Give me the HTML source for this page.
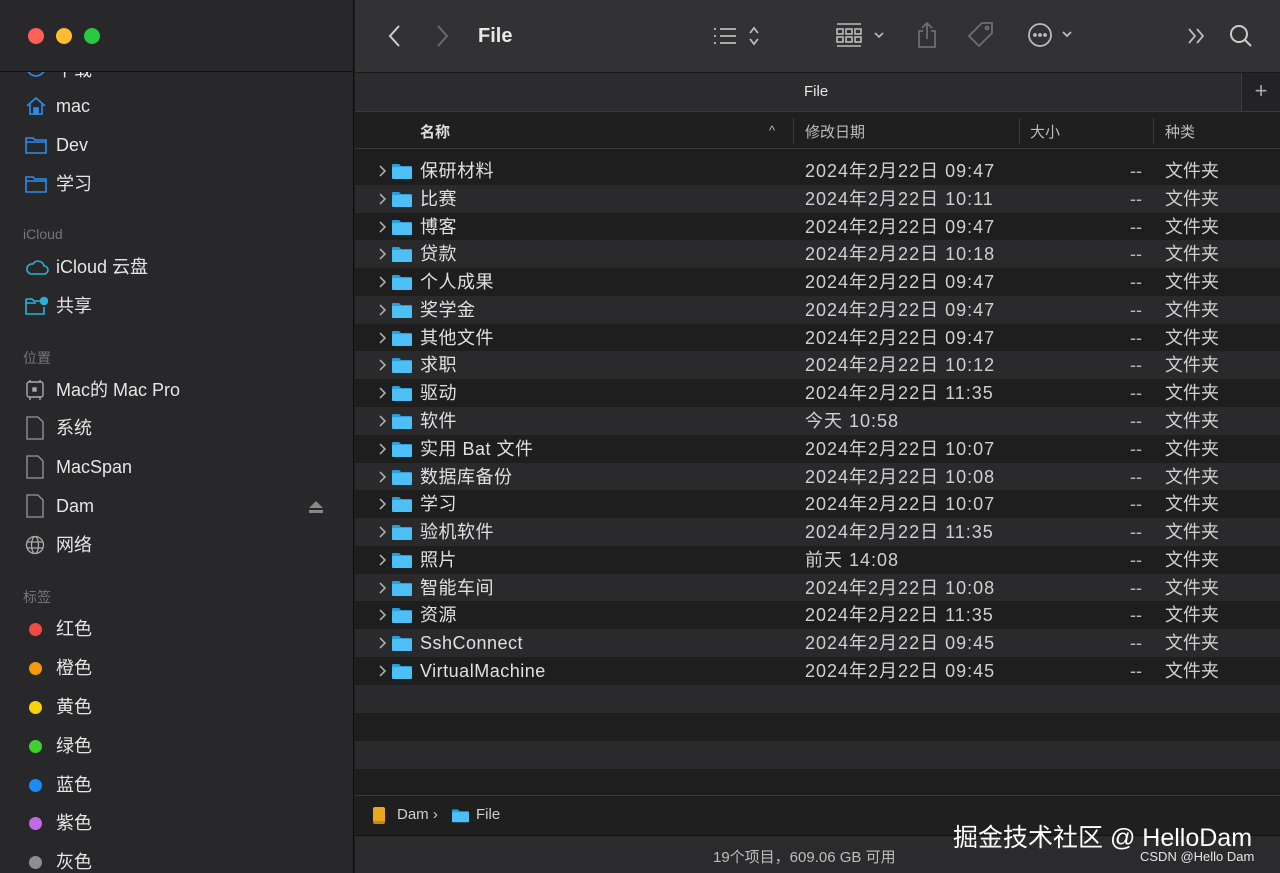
<!DOCTYPE html><html><head><meta charset="utf-8"><style>
*{margin:0;padding:0;box-sizing:border-box}
body{width:1280px;height:873px;overflow:hidden;background:#1e1e1f;font-family:"Liberation Sans","Noto Sans CJK SC",sans-serif;color:#dcdcdc;position:relative}
.abs{position:absolute}
#side{left:0;top:0;width:354px;height:873px;background:#28282b;border-right:1px solid #0c0c0c;overflow:hidden}
.si{position:absolute;left:56px;font-size:18px;color:#e6e6e6;line-height:20px}
.sh{position:absolute;left:23px;font-size:14px;color:#76767a}
.ic{position:absolute;left:25px}
.dot{position:absolute;left:29px;width:13px;height:13px;border-radius:50%}
#tb{left:355px;top:0;width:925px;height:72px;background:#323234;z-index:5}
#tabs{left:355px;top:72px;width:925px;height:39px;background:#2c2c2e;border-top:1px solid #1a1a1a}
#hdr{left:355px;top:111px;width:925px;height:38px;background:#1f1f20;border-top:1px solid #3a3a3c;border-bottom:1px solid #3a3a3c}
.hc{position:absolute;top:9px;font-size:15px;color:#bdbdbd}
.sep{position:absolute;top:6px;width:1px;height:26px;background:#3a3a3c}
.row{position:absolute;left:355px;width:925px;height:28px;font-size:18px;line-height:28px;color:#e0e0e0;background:#1e1e1f}
.row span{position:absolute;top:0}
.row .c{left:450px;color:#d0d0d0;letter-spacing:1px}
.row .s{left:775px;color:#bbb}
.row .k{left:810px;color:#d0d0d0}
.row .n{left:65px;letter-spacing:0.5px}
.row .a{left:23px;top:8px;width:9px;height:12px}
.l{background:#2a2a2c}
.fd{position:absolute;left:37px;top:6px;width:20px;height:16px}
</style></head><body>
<svg width="0" height="0" style="position:absolute"><defs>
<symbol id="f" viewBox="0 0 20 16"><path d="M0 2a1 1 0 0 1 1-1h6l2 2h10a1 1 0 0 1 1 1v11H0z" fill="#2a9fdc"/><rect y="4" width="20" height="12" rx="1" fill="#4cc0f4"/></symbol>
<symbol id="ch" viewBox="0 0 9 12"><path d="M2 1l5 5-5 5" fill="none" stroke="#aaa" stroke-width="1.6"/></symbol>
</defs></svg>
<div id="side" class="abs">
<svg class="ic" style="top:62px" width="22" height="18" viewBox="0 0 22 18" fill="none" stroke="#2a8cf0" stroke-width="1.6"><circle cx="11" cy="5" r="9"/></svg>
<div class="si" style="top:60px">下载</div>
<div class="abs" style="left:0;top:0;width:354px;height:72px;background:#28282b;border-bottom:1px solid #111"></div>
<div class="abs" style="left:28px;top:28px;width:16px;height:16px;border-radius:50%;background:#fe5f57"></div>
<div class="abs" style="left:56px;top:28px;width:16px;height:16px;border-radius:50%;background:#febc2e"></div>
<div class="abs" style="left:84px;top:28px;width:16px;height:16px;border-radius:50%;background:#28c840"></div>
<svg class="ic" style="top:95px" width="22" height="22" viewBox="0 0 22 22" fill="none" stroke="#2a8cf0" stroke-width="1.6"><path d="M2 11L11 3l9 8M5 9v10h12V9"/><rect x="9" y="13" width="4" height="6" fill="#2a8cf0"/></svg><div class="si" style="top:96px">mac</div>
<svg class="ic" style="top:136px" width="22" height="18" viewBox="0 0 22 18" fill="none" stroke="#2a8cf0" stroke-width="1.6"><path d="M1 2h7l2 2h11v13H1zM1 6h20"/></svg><div class="si" style="top:135px">Dev</div>
<svg class="ic" style="top:175px" width="22" height="18" viewBox="0 0 22 18" fill="none" stroke="#2a8cf0" stroke-width="1.6"><path d="M1 2h7l2 2h11v13H1zM1 6h20"/></svg><div class="si" style="top:174px">学习</div>
<div class="sh" style="top:226px">iCloud</div>
<svg class="ic" style="top:259px" width="24" height="16" viewBox="0 0 24 16" fill="none" stroke="#2ab0d8" stroke-width="1.6"><path d="M6 15h13a4 4 0 0 0 0-8 6 6 0 0 0-11-2A5 5 0 0 0 6 15z"/></svg><div class="si" style="top:257px">iCloud 云盘</div>
<svg class="ic" style="top:296px" width="23" height="19" viewBox="0 0 23 19" fill="none" stroke="#2ab0d8" stroke-width="1.6"><path d="M1 3h6l2 2h6M1 3v15h18v-7M1 7h10"/><circle cx="19" cy="5" r="3.5" fill="#2ab0d8"/></svg><div class="si" style="top:296px">共享</div>
<div class="sh" style="top:348px">位置</div>
<svg class="ic" style="top:379px" width="20" height="22" viewBox="0 0 20 22" fill="none" stroke="#aaa" stroke-width="1.4"><rect x="2" y="3" width="16" height="15" rx="2"/><path d="M5 1v2M15 1v2M5 18v3M15 18v3"/><rect x="8" y="9" width="3" height="3" fill="#aaa"/></svg><div class="si" style="top:380px">Mac的 Mac Pro</div>
<svg class="ic" style="top:416px" width="20" height="24" viewBox="0 0 20 24" fill="none" stroke="#999" stroke-width="1.3"><path d="M2 1h11l5 5v17H2z"/></svg><div class="si" style="top:418px">系统</div>
<svg class="ic" style="top:455px" width="20" height="24" viewBox="0 0 20 24" fill="none" stroke="#999" stroke-width="1.3"><path d="M2 1h11l5 5v17H2z"/></svg><div class="si" style="top:457px">MacSpan</div>
<svg class="ic" style="top:494px" width="20" height="24" viewBox="0 0 20 24" fill="none" stroke="#999" stroke-width="1.3"><path d="M2 1h11l5 5v17H2z"/></svg><div class="si" style="top:496px">Dam</div>
<svg class="abs" style="left:309px;top:501px" width="14" height="12" viewBox="0 0 14 12" fill="#888"><path d="M7 0l7 7H0z"/><rect y="9" width="14" height="3"/></svg>
<svg class="ic" style="top:535px" width="20" height="20" viewBox="0 0 20 20" fill="none" stroke="#aaa" stroke-width="1.3"><circle cx="10" cy="10" r="8.5"/><ellipse cx="10" cy="10" rx="3.5" ry="8.5"/><path d="M2 7h16M2 13h16"/></svg><div class="si" style="top:535px">网络</div>
<div class="sh" style="top:587px">标签</div>
<div class="dot" style="top:623px;background:#f04a45"></div><div class="si" style="top:619px">红色</div>
<div class="dot" style="top:662px;background:#f59a0b"></div><div class="si" style="top:658px">橙色</div>
<div class="dot" style="top:701px;background:#f5d30b"></div><div class="si" style="top:697px">黄色</div>
<div class="dot" style="top:740px;background:#3fd12c"></div><div class="si" style="top:736px">绿色</div>
<div class="dot" style="top:779px;background:#1a8cf5"></div><div class="si" style="top:775px">蓝色</div>
<div class="dot" style="top:817px;background:#c06ae8"></div><div class="si" style="top:813px">紫色</div>
<div class="dot" style="top:856px;background:#8e8e92"></div><div class="si" style="top:852px">灰色</div>
</div>
<div id="tb" class="abs">
<svg class="abs" style="left:32px;top:24px" width="14" height="24" viewBox="0 0 14 24" fill="none" stroke="#cfcfcf" stroke-width="2"><path d="M12 2L3 12l9 10"/></svg>
<svg class="abs" style="left:81px;top:24px" width="14" height="24" viewBox="0 0 14 24" fill="none" stroke="#6a6a6c" stroke-width="2"><path d="M2 2l9 10-9 10"/></svg>
<div class="abs" style="left:123px;top:24px;font-size:20px;line-height:24px;font-weight:bold;color:#e8e8e8">File</div>
<svg class="abs" style="left:357px;top:25px" width="52" height="22" viewBox="0 0 52 22" fill="none" stroke="#bbb" stroke-width="1.8"><path d="M8 4h16M8 11h16M8 18h16M2 4h2M2 11h2M2 18h2M38 8l4-5 4 5M38 14l4 5 4-5"/></svg>
<svg class="abs" style="left:480px;top:22px" width="56" height="26" viewBox="0 0 56 26" fill="none" stroke="#bbb" stroke-width="1.6"><path d="M2 2h24M2 24h24"/><rect x="2" y="7" width="6" height="5"/><rect x="11" y="7" width="6" height="5"/><rect x="20" y="7" width="6" height="5"/><rect x="2" y="15" width="6" height="5"/><rect x="11" y="15" width="6" height="5"/><rect x="20" y="15" width="6" height="5"/><path d="M40 11l4 4 4-4"/></svg>
<svg class="abs" style="left:561px;top:21px" width="22" height="28" viewBox="0 0 22 28" fill="none" stroke="#6e6e70" stroke-width="1.8"><path d="M7 10H3v16h16V10h-4M11 18V2M6 7l5-5 5 5"/></svg>
<svg class="abs" style="left:612px;top:21px" width="28" height="28" viewBox="0 0 28 28" fill="none" stroke="#6e6e70" stroke-width="1.8"><path d="M15 2h10v10L12 25 2 15z"/><circle cx="20" cy="7" r="1.5"/></svg>
<svg class="abs" style="left:672px;top:22px" width="50" height="26" viewBox="0 0 50 26" fill="none" stroke="#bbb" stroke-width="1.8"><circle cx="13" cy="13" r="11"/><circle cx="8" cy="13" r="1" fill="#bbb"/><circle cx="13" cy="13" r="1" fill="#bbb"/><circle cx="18" cy="13" r="1" fill="#bbb"/><path d="M36 10l4 4 4-4"/></svg>
<svg class="abs" style="left:832px;top:27px" width="20" height="18" viewBox="0 0 20 18" fill="none" stroke="#bbb" stroke-width="1.8"><path d="M2 2l6 7-6 7M10 2l6 7-6 7"/></svg>
<svg class="abs" style="left:874px;top:24px" width="24" height="24" viewBox="0 0 24 24" fill="none" stroke="#ccc" stroke-width="2"><circle cx="10" cy="10" r="8"/><path d="M16 16l6 6"/></svg>
</div>
<div id="tabs" class="abs">
<div class="abs" style="left:449px;top:10px;font-size:15px;color:#e8e8e8">File</div>
<div class="abs" style="left:886px;top:0;width:39px;height:38px;background:#232325;border-left:1px solid #3a3a3c;color:#aaa;font-size:22px;text-align:center;line-height:36px">+</div>
</div>
<div id="hdr" class="abs">
<div class="hc" style="left:65px;font-weight:bold;color:#ddd">名称</div>
<div class="hc" style="left:414px;font-size:13px;top:11px">^</div>
<div class="sep" style="left:438px"></div>
<div class="hc" style="left:450px">修改日期</div>
<div class="sep" style="left:664px"></div>
<div class="hc" style="left:675px">大小</div>
<div class="sep" style="left:798px"></div>
<div class="hc" style="left:810px">种类</div>
</div>

<div class="row" style="top:157px"><svg class="a" style="position:absolute"><use href="#ch"/></svg><svg class="fd"><use href="#f"/></svg><span class="n">保研材料</span><span class="c">2024年2月22日 09:47</span><span class="s">--</span><span class="k">文件夹</span></div>
<div class="row l" style="top:185px"><svg class="a" style="position:absolute"><use href="#ch"/></svg><svg class="fd"><use href="#f"/></svg><span class="n">比赛</span><span class="c">2024年2月22日 10:11</span><span class="s">--</span><span class="k">文件夹</span></div>
<div class="row" style="top:213px"><svg class="a" style="position:absolute"><use href="#ch"/></svg><svg class="fd"><use href="#f"/></svg><span class="n">博客</span><span class="c">2024年2月22日 09:47</span><span class="s">--</span><span class="k">文件夹</span></div>
<div class="row l" style="top:240px"><svg class="a" style="position:absolute"><use href="#ch"/></svg><svg class="fd"><use href="#f"/></svg><span class="n">贷款</span><span class="c">2024年2月22日 10:18</span><span class="s">--</span><span class="k">文件夹</span></div>
<div class="row" style="top:268px"><svg class="a" style="position:absolute"><use href="#ch"/></svg><svg class="fd"><use href="#f"/></svg><span class="n">个人成果</span><span class="c">2024年2月22日 09:47</span><span class="s">--</span><span class="k">文件夹</span></div>
<div class="row l" style="top:296px"><svg class="a" style="position:absolute"><use href="#ch"/></svg><svg class="fd"><use href="#f"/></svg><span class="n">奖学金</span><span class="c">2024年2月22日 09:47</span><span class="s">--</span><span class="k">文件夹</span></div>
<div class="row" style="top:324px"><svg class="a" style="position:absolute"><use href="#ch"/></svg><svg class="fd"><use href="#f"/></svg><span class="n">其他文件</span><span class="c">2024年2月22日 09:47</span><span class="s">--</span><span class="k">文件夹</span></div>
<div class="row l" style="top:351px"><svg class="a" style="position:absolute"><use href="#ch"/></svg><svg class="fd"><use href="#f"/></svg><span class="n">求职</span><span class="c">2024年2月22日 10:12</span><span class="s">--</span><span class="k">文件夹</span></div>
<div class="row" style="top:379px"><svg class="a" style="position:absolute"><use href="#ch"/></svg><svg class="fd"><use href="#f"/></svg><span class="n">驱动</span><span class="c">2024年2月22日 11:35</span><span class="s">--</span><span class="k">文件夹</span></div>
<div class="row l" style="top:407px"><svg class="a" style="position:absolute"><use href="#ch"/></svg><svg class="fd"><use href="#f"/></svg><span class="n">软件</span><span class="c">今天 10:58</span><span class="s">--</span><span class="k">文件夹</span></div>
<div class="row" style="top:435px"><svg class="a" style="position:absolute"><use href="#ch"/></svg><svg class="fd"><use href="#f"/></svg><span class="n">实用 Bat 文件</span><span class="c">2024年2月22日 10:07</span><span class="s">--</span><span class="k">文件夹</span></div>
<div class="row l" style="top:463px"><svg class="a" style="position:absolute"><use href="#ch"/></svg><svg class="fd"><use href="#f"/></svg><span class="n">数据库备份</span><span class="c">2024年2月22日 10:08</span><span class="s">--</span><span class="k">文件夹</span></div>
<div class="row" style="top:490px"><svg class="a" style="position:absolute"><use href="#ch"/></svg><svg class="fd"><use href="#f"/></svg><span class="n">学习</span><span class="c">2024年2月22日 10:07</span><span class="s">--</span><span class="k">文件夹</span></div>
<div class="row l" style="top:518px"><svg class="a" style="position:absolute"><use href="#ch"/></svg><svg class="fd"><use href="#f"/></svg><span class="n">验机软件</span><span class="c">2024年2月22日 11:35</span><span class="s">--</span><span class="k">文件夹</span></div>
<div class="row" style="top:546px"><svg class="a" style="position:absolute"><use href="#ch"/></svg><svg class="fd"><use href="#f"/></svg><span class="n">照片</span><span class="c">前天 14:08</span><span class="s">--</span><span class="k">文件夹</span></div>
<div class="row l" style="top:574px"><svg class="a" style="position:absolute"><use href="#ch"/></svg><svg class="fd"><use href="#f"/></svg><span class="n">智能车间</span><span class="c">2024年2月22日 10:08</span><span class="s">--</span><span class="k">文件夹</span></div>
<div class="row" style="top:601px"><svg class="a" style="position:absolute"><use href="#ch"/></svg><svg class="fd"><use href="#f"/></svg><span class="n">资源</span><span class="c">2024年2月22日 11:35</span><span class="s">--</span><span class="k">文件夹</span></div>
<div class="row l" style="top:629px"><svg class="a" style="position:absolute"><use href="#ch"/></svg><svg class="fd"><use href="#f"/></svg><span class="n">SshConnect</span><span class="c">2024年2月22日 09:45</span><span class="s">--</span><span class="k">文件夹</span></div>
<div class="row" style="top:657px"><svg class="a" style="position:absolute"><use href="#ch"/></svg><svg class="fd"><use href="#f"/></svg><span class="n">VirtualMachine</span><span class="c">2024年2月22日 09:45</span><span class="s">--</span><span class="k">文件夹</span></div>
<div class="row l" style="top:685px"></div>
<div class="row" style="top:713px"></div>
<div class="row l" style="top:741px"></div>
<div class="row" style="top:769px;height:26px"></div>

<div class="abs" style="left:355px;top:795px;width:925px;height:40px;background:#1f1f20;border-top:1px solid #3a3a3c;font-size:15px;color:#cfcfcf">
<div class="abs" style="left:18px;top:11px;width:12px;height:17px;background:#e9a81d;border-radius:2px;border-bottom:3px solid #c28a10"></div>
<div class="abs" style="left:42px;top:10px">Dam ›</div>
<svg class="abs" style="left:97px;top:12px" width="17" height="15"><use href="#f"/></svg>
<div class="abs" style="left:121px;top:10px">File</div>
</div>
<div class="abs" style="left:355px;top:835px;width:925px;height:38px;background:#2b2b2d;border-top:1px solid #111;font-size:15px;color:#bdbdbd">
<div class="abs" style="left:358px;top:10px">19个项目，609.06 GB 可用</div>
</div>
<div class="abs" style="left:953px;top:818px;font-size:25px;color:#fff;white-space:nowrap">掘金技术社区 @ HelloDam</div>
<div class="abs" style="left:1140px;top:849px;font-size:13px;color:#e6e6e6">CSDN @Hello Dam</div>
</body></html>
